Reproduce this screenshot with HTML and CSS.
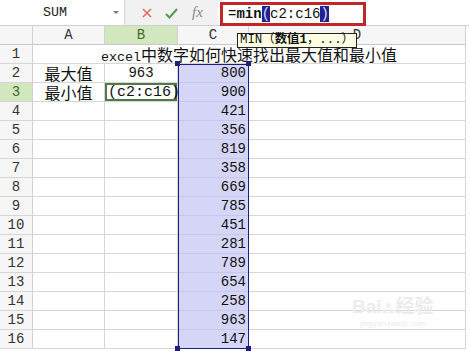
FILE: index.html
```html
<!DOCTYPE html>
<html>
<head>
<meta charset="utf-8">
<link rel="stylesheet" href="styles.css">
</head>
<body>
<div class="app">
  <div class="fbar">
    <div class="namebox"><span class="nm">SUM</span><span class="dd"></span></div>
    <div class="tools">
      <svg class="ic-x" width="10" height="10" viewBox="0 0 10 10"><path d="M1 1L9 9M9 1L1 9" stroke="#e06a64" stroke-width="1.6" fill="none"/></svg>
      <svg class="ic-ok" width="13" height="11" viewBox="0 0 13 11"><path d="M1 6L4.5 9.5L12 1" stroke="#4f9d4f" stroke-width="2" fill="none"/></svg>
      <span class="fx">fx</span>
    </div>
    <div class="formula">
      <div class="fbox">=<b>min</b><span class="par">(</span>c2:c16<span class="par">)</span></div>
    </div>
  </div>

  <div class="sheet">
    <div class="hrow">
      <div class="hc rhc"></div>
      <div class="hc wa">A</div>
      <div class="hc wb on">B</div>
      <div class="hc wc">C</div>
      <div class="hc wd">D</div>
    </div>
    <div class="trow">
      <div class="rh">1</div>
      <div class="title"><span class="lat">excel</span>中数字如何快速找出最大值和最小值</div>
    </div>
    <div class="body">
      <div class="col rcol">
        <div class="rh">2</div><div class="rh on">3</div><div class="rh">4</div><div class="rh">5</div><div class="rh">6</div>
        <div class="rh">7</div><div class="rh">8</div><div class="rh">9</div><div class="rh">10</div><div class="rh">11</div>
        <div class="rh">12</div><div class="rh">13</div><div class="rh">14</div><div class="rh">15</div><div class="rh">16</div>
      </div>
      <div class="col wa">
        <div class="c cj">最大值</div><div class="c cj">最小值</div><div class="c"></div><div class="c"></div><div class="c"></div>
        <div class="c"></div><div class="c"></div><div class="c"></div><div class="c"></div><div class="c"></div>
        <div class="c"></div><div class="c"></div><div class="c"></div><div class="c"></div><div class="c"></div>
      </div>
      <div class="col wb">
        <div class="c num-c">963</div><div class="c active">(c2:c16)</div><div class="c"></div><div class="c"></div><div class="c"></div>
        <div class="c"></div><div class="c"></div><div class="c"></div><div class="c"></div><div class="c"></div>
        <div class="c"></div><div class="c"></div><div class="c"></div><div class="c"></div><div class="c"></div>
      </div>
      <div class="col wc range">
        <div class="c num">800</div><div class="c num">900</div><div class="c num">421</div><div class="c num">356</div><div class="c num">819</div>
        <div class="c num">358</div><div class="c num">669</div><div class="c num">785</div><div class="c num">451</div><div class="c num">281</div>
        <div class="c num">789</div><div class="c num">654</div><div class="c num">258</div><div class="c num">963</div><div class="c num">147</div>
        <span class="hd tl"></span><span class="hd tr"></span><span class="hd bl"></span><span class="hd br"></span>
      </div>
      <div class="col wd">
        <div class="c"></div><div class="c"></div><div class="c"></div><div class="c"></div><div class="c"></div>
        <div class="c"></div><div class="c"></div><div class="c"></div><div class="c"></div><div class="c"></div>
        <div class="c"></div><div class="c"></div><div class="c"></div><div class="c"></div><div class="c"></div>
      </div>
    </div>
  </div>

  <div class="tip">MIN（<b>数值1</b>，...）</div>
  <div class="wm"><span class="wm-big">Bai<span class="paw">⁂</span>经验</span><span class="wm-small">jingyan.baidu.com</span></div>
</div>
</body>
</html>
```

FILE: styles.css
```css
* { box-sizing: border-box; }
html, body { margin: 0; padding: 0; }
body {
  width: 469px;
  height: 351px;
  overflow: hidden;
  background: #fff;
  font-family: "Liberation Mono", "Noto Sans CJK SC", monospace;
  color: #111;
}
.app { position: relative; width: 469px; height: 351px; }

/* formula bar */
.fbar {
  display: flex;
  height: 26px;
  background: #f1f1f1;
  border-bottom: 1px solid #cfcfcf;
}
.namebox {
  width: 125px;
  background: #fff;
  border-right: 1px solid #d6d6d6;
  display: flex;
  align-items: center;
  padding-left: 43px;
  padding-right: 5px;
}
.nm { font-size: 13.3px; color: #222; }
.dd {
  margin-left: auto;
  width: 0; height: 0;
  border-left: 3px solid transparent;
  border-right: 3px solid transparent;
  border-top: 3px solid #777;
}
.tools {
  width: 93px;
  display: flex;
  align-items: center;
  padding-left: 17px;
}
.ic-x { margin-top: 1px; }
.ic-ok { margin-left: 13px; margin-top: 1px; }
.fx {
  margin-left: 14px;
  font-family: "Liberation Serif", serif;
  font-style: italic;
  font-size: 15px;
  color: #8a8a8a;
}
.formula {
  flex: 1;
  background: #fff;
  padding: 2px 0 0 2px;
}
.fbox {
  width: 146px;
  height: 24px;
  border: 3px solid #c1262c;
  font-size: 14px;
  line-height: 18px;
  padding-left: 5px;
  color: #111;
  white-space: nowrap;
}
.fbox b { font-weight: bold; }
.par { background: #22228e; color: #d8dcff; }

/* sheet */
.sheet { width: 469px; }
.hrow, .trow, .body { display: flex; }
.hc {
  height: 19px;
  background: #f6f6f6;
  border-right: 1px solid #d2d2d2;
  border-bottom: 1px solid #c9c9c9;
  display: flex;
  align-items: center;
  justify-content: center;
  font-size: 14px;
  color: #333;
}
.hc.on { background: #d3e7bf; color: #3d6b2b; }
.rhc, .rcol, .rh { width: 33px; }
.wa { width: 72px; }
.wb { width: 73px; }
.wc { width: 71px; }
.wd { width: 217px; }

.rh {
  height: 19px;
  background: #f6f6f6;
  border-right: 1px solid #d2d2d2;
  border-bottom: 1px solid #d6d6d6;
  display: flex;
  align-items: center;
  justify-content: center;
  font-size: 14px;
  color: #333;
}
.rh.on { background: #d3e7bf; color: #3d6b2b; }

.title {
  width: 433px;
  height: 19px;
  border-right: 1px solid #d6d6d6;
  border-bottom: 1px solid #d6d6d6;
  text-align: center;
  font-size: 16px;
  line-height: 19px;
  white-space: nowrap;
  font-family: "Noto Sans CJK SC", sans-serif;
}
.lat { font-family: "Liberation Mono", monospace; font-size: 13.4px; }

.col { display: flex; flex-direction: column; }
.c {
  height: 19px;
  border-right: 1px solid #d6d6d6;
  border-bottom: 1px solid #d6d6d6;
  display: flex;
  align-items: center;
  font-size: 14px;
}
.cj {
  justify-content: center;
  font-family: "Noto Sans CJK SC", sans-serif;
  font-size: 16px;
}
.num-c { justify-content: center; }
.active {
  box-shadow: inset 0 0 0 2px #52784a;
  padding-left: 3px;
  font-size: 15px;
  white-space: nowrap;
}

.range {
  position: relative;
  background: #d5d5f8;
  outline: 1.5px solid #1e1e7c;
  outline-offset: -1px;
}
.range .c { border-bottom-color: #c7c7ec; border-right-color: #1e1e7c; }
.num { justify-content: flex-end; padding-right: 2px; }
.hd {
  position: absolute;
  width: 5px; height: 5px;
  background: #1e1e7c;
}
.tl { left: -3px; top: -3px; }
.tr { right: -2px; top: -3px; }
.bl { left: -3px; bottom: -2px; }
.br { right: -2px; bottom: -2px; }

/* tooltip */
.tip {
  position: absolute;
  left: 237px;
  top: 33px;
  height: 15px;
  padding: 0 2px;
  background: #ffffe1;
  border: 1px solid #222;
  font-size: 12.4px;
  line-height: 13px;
  white-space: nowrap;
}
.tip b { font-weight: bold; }

/* watermark */
.wm {
  position: absolute;
  left: 352px;
  top: 296px;
  display: flex;
  flex-direction: column;
  align-items: center;
  color: #ececec;
  font-family: "Liberation Sans", "Noto Sans CJK SC", sans-serif;
}
.wm-big { font-size: 19px; font-weight: bold; line-height: 22px; }
.paw { font-size: 14px; }
.wm-small { font-size: 8px; line-height: 10px; }
```
